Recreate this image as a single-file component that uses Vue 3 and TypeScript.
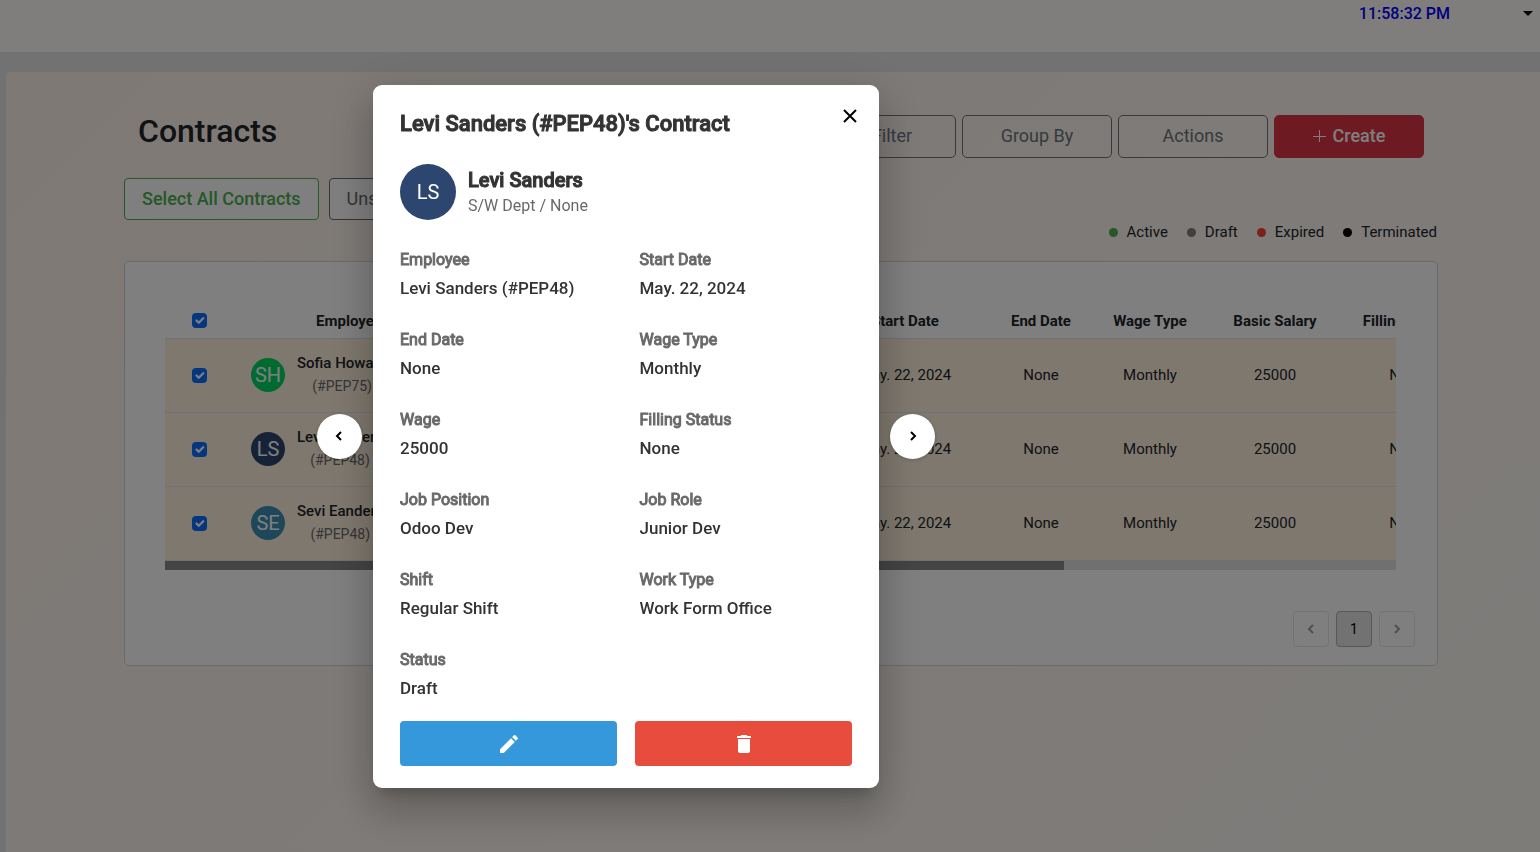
<script setup lang="ts">
import { ref } from 'vue'

interface Row {
  initials: string
  name: string
  badge: string
  tone: string
  selected: boolean
}

const rows = ref<Row[]>([
  { initials: 'SH', name: 'Sofia Howard', badge: '(#PEP75)', tone: 'green', selected: true },
  { initials: 'LS', name: 'Levi Sanders', badge: '(#PEP48)', tone: 'navy', selected: true },
  { initials: 'SE', name: 'Sevi Eanders', badge: '(#PEP48)', tone: 'teal', selected: true },
])
const allSelected = ref(true)

const legend = [
  { label: 'Active', tone: 'active' },
  { label: 'Draft', tone: 'draft' },
  { label: 'Expired', tone: 'expired' },
  { label: 'Terminated', tone: 'terminated' },
]

const fields = [
  ['Employee', 'Levi Sanders (#PEP48)'],
  ['Start Date', 'May. 22, 2024'],
  ['End Date', 'None'],
  ['Wage Type', 'Monthly'],
  ['Wage', '25000'],
  ['Filling Status', 'None'],
  ['Job Position', 'Odoo Dev'],
  ['Job Role', 'Junior Dev'],
  ['Shift', 'Regular Shift'],
  ['Work Type', 'Work Form Office'],
  ['Status', 'Draft'],
]
</script>

<template>
  <div class="page">
    <header class="topbar">
      <span class="clock">11:58:32 PM</span>
      <button class="menu" type="button" aria-label="Account menu">
        <svg width="10" height="5" viewBox="0 0 10 5"><path d="M0 0h10L5 5z" /></svg>
      </button>
    </header>

    <main class="panel">
      <div class="heading">
        <h1>Contracts</h1>
        <div class="tools">
          <button class="tool" type="button">
            <svg width="15" height="13" viewBox="0 0 15 13"><path d="M1 1h13L9 7v5L6 9V7z" /></svg>
            Filter
          </button>
          <button class="tool" type="button">Group By</button>
          <button class="tool" type="button">Actions</button>
          <button class="tool create" type="button">
            <svg width="13" height="13" viewBox="0 0 13 13"><path d="M6.500 1v12M0 7.500h13" /></svg>
            Create
          </button>
        </div>
      </div>

      <div class="selection">
        <button class="select-all" type="button">Select All Contracts</button>
        <button class="unselect" type="button">Unselect All</button>
      </div>

      <ul class="legend">
        <li v-for="item in legend" :key="item.label">
          <i class="dot" :class="item.tone"></i>{{ item.label }}
        </li>
      </ul>

      <section class="card">
        <div class="scroller">
          <table>
            <colgroup>
              <col class="c-check" />
              <col class="c-employee" />
              <col class="c-contract" />
              <col class="c-start" />
              <col class="c-end" />
              <col class="c-type" />
              <col class="c-salary" />
              <col class="c-status" />
            </colgroup>
            <thead>
              <tr>
                <th><input v-model="allSelected" type="checkbox" aria-label="Select all" /></th>
                <th>Employee</th>
                <th>Contract</th>
                <th>Start Date</th>
                <th>End Date</th>
                <th>Wage Type</th>
                <th>Basic Salary</th>
                <th>Filling Status</th>
              </tr>
            </thead>
            <tbody>
              <tr v-for="row in rows" :key="row.name">
                <td><input v-model="row.selected" type="checkbox" :aria-label="row.name" /></td>
                <td>
                  <div class="person">
                    <span class="avatar" :class="row.tone">{{ row.initials }}</span>
                    <span class="who">
                      <b>{{ row.name }}</b>
                      <small>{{ row.badge }}</small>
                    </span>
                  </div>
                </td>
                <td>Contract</td>
                <td>May. 22, 2024</td>
                <td>None</td>
                <td>Monthly</td>
                <td>25000</td>
                <td>None</td>
              </tr>
            </tbody>
          </table>
        </div>
        <div class="track"><div class="thumb"></div></div>
        <nav class="pager" aria-label="Pages">
          <button type="button" disabled aria-label="Previous page">
            <svg width="8" height="10" viewBox="0 0 8 10"><path d="M6 1L2 5l4 4" /></svg>
          </button>
          <button class="current" type="button">1</button>
          <button type="button" disabled aria-label="Next page">
            <svg width="8" height="10" viewBox="0 0 8 10"><path d="M2 1l4 4-4 4" /></svg>
          </button>
        </nav>
      </section>
    </main>

    <div class="backdrop">
      <button class="step" type="button" aria-label="Previous contract">
        <svg width="9" height="13" viewBox="0 0 9 13"><path d="M6 2L2 6l4 4" /></svg>
      </button>
      <section class="dialog" role="dialog" aria-modal="true" aria-labelledby="dialog-title">
        <div class="dialog-head">
          <h2 id="dialog-title">Levi Sanders (#PEP48)'s Contract</h2>
          <button class="close" type="button" aria-label="Close">
            <svg width="14" height="14" viewBox="0 0 14 14"><path d="M1 1l12 12M13 1L1 13" /></svg>
          </button>
        </div>
        <div class="profile">
          <span class="portrait">LS</span>
          <div>
            <h3>Levi Sanders</h3>
            <p>S/W Dept / None</p>
          </div>
        </div>
        <dl class="fields">
          <div v-for="field in fields" :key="field[0]">
            <dt>{{ field[0] }}</dt>
            <dd>{{ field[1] }}</dd>
          </div>
        </dl>
        <div class="dialog-actions">
          <button class="edit" type="button" aria-label="Edit">
            <svg width="24" height="24" viewBox="0 0 24 24">
              <path d="M3 17.250V21h3.750L17.810 9.940l-3.750-3.750L3 17.250zM20.710 7.040a1 1 0 0 0 0-1.410l-2.340-2.340a1 1 0 0 0-1.410 0l-1.830 1.830 3.750 3.750 1.830-1.830z" />
            </svg>
          </button>
          <button class="delete" type="button" aria-label="Delete">
            <svg width="24" height="24" viewBox="0 0 24 24">
              <path d="M6 19c0 1.100.9 2 2 2h8c1.100 0 2-.9 2-2V7H6v12zM19 4h-3.500l-1-1h-5l-1 1H5v2h14V4z" />
            </svg>
          </button>
        </div>
      </section>
      <button class="step" type="button" aria-label="Next contract">
        <svg width="8" height="13" viewBox="0 0 8 13"><path d="M2 2l4 4-4 4" /></svg>
      </button>
    </div>
  </div>
</template>

<style>
body {
  margin: 0;
}
</style>

<style scoped>
* {
  box-sizing: border-box;
}

.page {
  display: flex;
  flex-direction: column;
  min-height: 100vh;
  background: #e4e4e4;
  color: #212529;
  font-family: Roboto, 'Liberation Sans', sans-serif;
  font-size: 15px;
}

button {
  padding: 0;
  border: 0;
  background: none;
  font: inherit;
  color: inherit;
}

svg {
  display: block;
}

.topbar {
  display: flex;
  justify-content: flex-end;
  align-items: flex-start;
  gap: 73px;
  height: 52px;
  padding: 0 7px;
  background: #fffdf8;
}

.clock {
  color: #00f;
  font-size: 16px;
  font-weight: 500;
  line-height: 27px;
}

.menu {
  height: 27px;
}

.menu svg {
  fill: #000;
}

.panel {
  flex: 1;
  margin: 20px 0 0 6px;
  padding: 43px 102px 0 118px;
  border-radius: 5px 0 0 0;
  background: linear-gradient(135deg, #fef3ec, #fbf8f3);
}

.heading {
  display: flex;
  justify-content: space-between;
  padding: 0 14px;
}

h1 {
  margin: 0;
  font-size: 32px;
  font-weight: 500;
  line-height: 32px;
}

.tools {
  display: flex;
  gap: 6px;
}

.tool {
  display: flex;
  align-items: center;
  justify-content: center;
  gap: 7px;
  width: 150px;
  height: 43px;
  padding-bottom: 2px;
  border: 1px solid #6c757d;
  border-radius: 5px;
  color: #6c757d;
  font-size: 18px;
}

.tool svg {
  fill: none;
  stroke: #6c757d;
}

.create {
  border-color: #dc3545;
  background: #dc3545;
  color: #fff;
  font-weight: 500;
}

.create svg {
  stroke: #fff;
}

.selection {
  display: flex;
  gap: 10px;
  margin-top: 20px;
}

.selection button {
  height: 42px;
  padding: 0 17px 2px;
  border: 1px solid #696969;
  border-radius: 4px;
  background: #fff;
  color: #696969;
  font-size: 18px;
}

.selection .select-all {
  border-color: #4caf50;
  color: #4caf50;
  font-weight: 500;
}

.legend {
  display: flex;
  justify-content: flex-end;
  gap: 19px;
  margin: 0 1px 17px 0;
  padding: 0;
  list-style: none;
  line-height: 24px;
}

.legend li {
  display: flex;
  align-items: center;
}

.dot {
  width: 9px;
  height: 9px;
  margin-right: 9px;
  border-radius: 50%;
}

.active {
  background: #4caf50;
}

.draft {
  background: #808080;
}

.expired {
  background: #f44336;
}

.terminated {
  background: #000;
}

.card {
  padding: 40px 41px 18px 40px;
  border: 1px solid #d5d5d5;
  border-radius: 5px;
  background: #fff;
}

.scroller {
  overflow: hidden;
}

table {
  width: max-content;
  table-layout: fixed;
  border-collapse: collapse;
  text-align: center;
}

.c-check {
  width: 69px;
}

.c-employee {
  width: 230px;
}

.c-contract {
  width: 359px;
}

.c-start {
  width: 164px;
}

.c-end {
  width: 108px;
}

.c-type {
  width: 110px;
}

.c-salary {
  width: 140px;
}

.c-status {
  width: 124px;
}

th {
  height: 36px;
  padding: 2px 0 0;
  border-bottom: 1px solid #dee2e6;
  font-size: 15px;
  font-weight: 700;
}

td {
  height: 74px;
  padding: 0;
  border-bottom: 1px solid #dee2e6;
  background: #fff1de;
}

input[type='checkbox'] {
  display: block;
  width: 15px;
  height: 15px;
  margin: 0 auto;
  appearance: none;
  border-radius: 4px;
  background: #fff;
}

input[type='checkbox']:checked {
  background: #0d6efd url("data:image/svg+xml,%3Csvg xmlns='http://www.w3.org/2000/svg' viewBox='0 0 20 20'%3E%3Cpath fill='none' stroke='%23fff' stroke-linecap='round' stroke-linejoin='round' stroke-width='3' d='m6 10 3 3 6-6'/%3E%3C/svg%3E") center / 15px 15px no-repeat;
}

.person {
  display: flex;
  align-items: center;
  gap: 12px;
  padding-left: 17px;
}

.avatar {
  display: grid;
  place-items: center;
  width: 34px;
  height: 34px;
  border-radius: 50%;
  color: #fff;
  font-size: 20px;
}

.green {
  background: #00d563;
}

.navy {
  background: #2d466f;
}

.teal {
  background: #3c91b4;
}

.who {
  display: flex;
  flex-direction: column;
  line-height: 23px;
}

.who b {
  font-weight: 500;
}

.who small {
  color: #696969;
  font-size: 14px;
}

.track {
  height: 9px;
  background: #e0e0e0;
}

.thumb {
  width: 73%;
  height: 100%;
  background: #888;
}

.pager {
  display: flex;
  justify-content: flex-end;
  gap: 7px;
  margin: 41px -19px 0 0;
}

.pager button {
  display: grid;
  place-items: center;
  width: 36px;
  height: 36px;
  border: 1px solid #e6e6e6;
  border-radius: 4px;
  font-size: 14px;
}

.pager .current {
  border-color: #b0b0b0;
  background: #e4e4e4;
  color: #000;
}

.pager svg {
  fill: none;
  stroke: #a0a0a0;
  stroke-width: 2;
}

.backdrop {
  position: fixed;
  inset: 0;
  display: flex;
  align-items: center;
  justify-content: center;
  gap: 11px;
  padding: 21px 288px 0 0;
  background: rgba(0, 0, 0, 0.5);
}

/* The round buttons stay above the dialog's wide shadow. */
.step {
  position: relative;
  z-index: 1;
  display: grid;
  place-items: center;
  width: 45px;
  height: 45px;
  border-radius: 50%;
  background: #fff;
  box-shadow: 0 1px 4px rgba(0, 0, 0, 0.2);
}

.step svg,
.close svg {
  fill: none;
  stroke: #000;
  stroke-width: 2;
}

.dialog {
  width: 506px;
  padding: 22px 27px;
  border-radius: 9px;
  background: #fff;
  color: #333;
  box-shadow:
    0 11px 15px -7px rgba(0, 0, 0, 0.2),
    0 24px 38px 3px rgba(0, 0, 0, 0.14),
    0 9px 46px 8px rgba(0, 0, 0, 0.12);
}

.dialog-head {
  display: flex;
  justify-content: space-between;
  height: 57px;
}

h2,
h3 {
  margin: 0;
  font-weight: 500;
  -webkit-text-stroke: 1px currentColor;
}

h2 {
  font-size: 22px;
  line-height: 34px;
}

.close {
  display: grid;
  place-items: center;
  width: 18px;
  height: 18px;
  margin-right: -7px;
}

.profile {
  display: flex;
  align-items: center;
  gap: 12px;
}

.portrait {
  display: grid;
  place-items: center;
  width: 56px;
  height: 56px;
  border-radius: 50%;
  background: #2d466f;
  color: #fff;
  font-size: 20px;
}

h3 {
  font-size: 20px;
  line-height: 28px;
}

p {
  margin: 0;
  color: #696969;
  font-size: 16px;
  line-height: 24px;
}

.fields {
  display: grid;
  grid-template-columns: 1fr 1fr;
  gap: 28px 27px;
  margin: 28px 0 21px;
  line-height: 24px;
}

dt {
  margin-bottom: 4px;
  color: #696969;
  font-size: 16px;
  font-weight: 400;
  -webkit-text-stroke: 1px currentColor;
}

dd {
  margin: 0;
  font-size: 17px;
  font-weight: 500;
}

.dialog-actions {
  display: grid;
  grid-template-columns: 1fr 1fr;
  gap: 18px;
}

.dialog-actions button {
  display: grid;
  place-items: center;
  height: 45px;
  border-radius: 4px;
  background: #3498db;
}

.dialog-actions .delete {
  background: #e74c3c;
}

.dialog-actions svg {
  fill: #fff;
}
</style>
